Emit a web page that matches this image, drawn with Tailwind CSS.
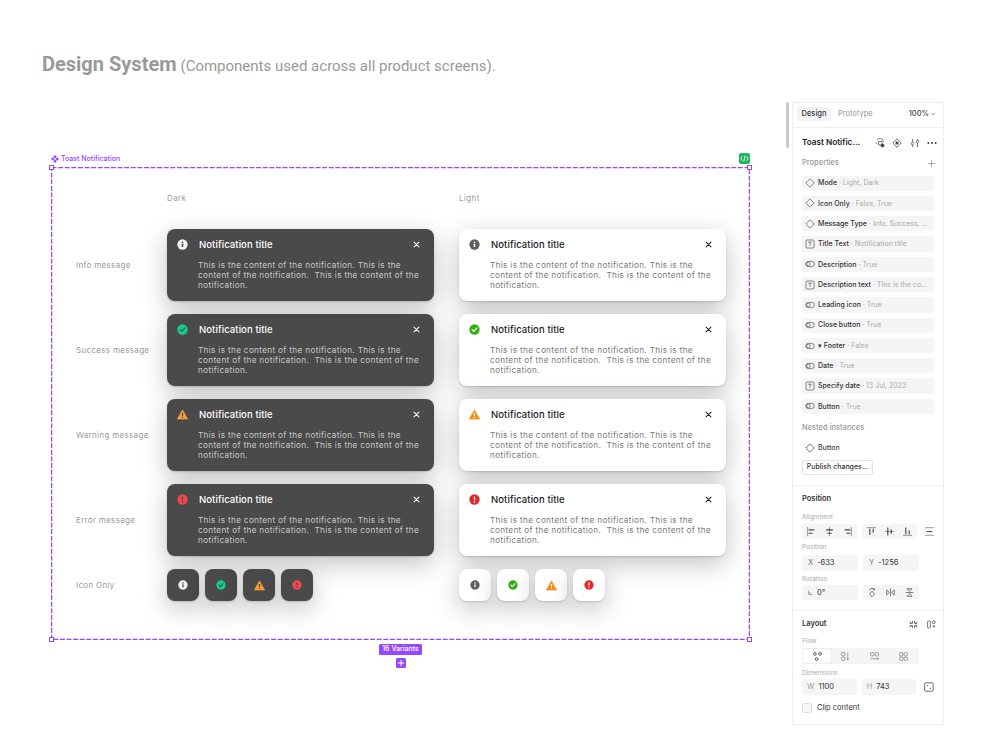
<!DOCTYPE html>
<html>
<head>
<meta charset="utf-8">
<script src="https://cdn.jsdelivr.net/npm/@tailwindcss/browser@4"></script>
</head>
<body class="bg-white">
<svg width="0" height="0" class="absolute">
  <symbol id="info" viewBox="0 0 12 12"><circle cx="6" cy="6" r="5.6" fill="currentColor"/><rect x="5.2" y="5.2" width="1.6" height="3.6" rx=".4" fill="var(--m)"/><circle cx="6" cy="3.6" r=".95" fill="var(--m)"/></symbol>
  <symbol id="ok" viewBox="0 0 12 12"><circle cx="6" cy="6" r="5.6" fill="currentColor"/><path d="M3.4 6.2 5.2 8l3.4-3.6" fill="none" stroke="var(--m)" stroke-width="1.3" stroke-linecap="round" stroke-linejoin="round"/></symbol>
  <symbol id="warn" viewBox="0 0 12 12"><path d="M6 .8 11.7 11H.3Z" fill="currentColor" stroke="currentColor" stroke-width=".6" stroke-linejoin="round"/><rect x="5.4" y="4.2" width="1.2" height="3.6" rx=".4" fill="var(--m)"/><circle cx="6" cy="9.2" r=".75" fill="var(--m)"/></symbol>
  <symbol id="err" viewBox="0 0 12 12"><circle cx="6" cy="6" r="5.6" fill="currentColor"/><rect x="5.3" y="2.8" width="1.4" height="4" rx=".5" fill="var(--m)"/><circle cx="6" cy="8.6" r=".85" fill="var(--m)"/></symbol>
  <symbol id="x" viewBox="0 0 8 8"><path d="M1.2 1.2 6.8 6.8M6.8 1.2 1.2 6.8" stroke="currentColor" stroke-width="1.15" stroke-linecap="round"/></symbol>
  <symbol id="dia" viewBox="0 0 10 10"><path d="M5 .8 9.2 5 5 9.2.8 5Z" fill="none" stroke="currentColor" stroke-width=".7" stroke-linejoin="round"/></symbol>
  <symbol id="txt" viewBox="0 0 10 10"><rect x="1" y="1" width="8" height="8" rx="1" fill="none" stroke="currentColor" stroke-width=".7"/><path d="M3.2 3.2h3.6M5 3.2v3.8" fill="none" stroke="currentColor" stroke-width=".7"/></symbol>
  <symbol id="tog" viewBox="0 0 10 10"><rect x=".7" y="2.4" width="8.6" height="5.2" rx="2.6" fill="none" stroke="currentColor" stroke-width=".7"/><circle cx="3.4" cy="5" r="1.8" fill="none" stroke="currentColor" stroke-width=".7"/></symbol>
</svg>

<div class="relative w-[1000px] h-[750px] overflow-hidden bg-white font-['Roboto',sans-serif]">

  <h1 class="absolute left-[42px] top-[51px] text-[#999999] leading-[26px] whitespace-nowrap">
    <span class="text-[20px] font-bold">Design System</span>
    <span class="text-[15px]">(Components used across all product screens).</span>
  </h1>

  <!-- Component set on the canvas -->
  <div class="absolute left-[51px] top-[153px] w-[699px] flex justify-between items-center h-[11px] text-[#9747ff]">
    <div class="flex items-center gap-[2px] text-[7px] font-['Inter',sans-serif] font-medium">
      <svg class="w-[8px] h-[8px]" viewBox="0 0 8 8"><path d="M4 0 5.8 1.8 4 3.6 2.2 1.8ZM1.8 2.2 3.6 4 1.8 5.8 0 4ZM6.2 2.2 8 4 6.2 5.8 4.4 4ZM4 4.4 5.8 6.2 4 8 2.2 6.2Z" fill="currentColor"/></svg>
      <span class="pt-[2px]">Toast Notification</span>
    </div>
    <div class="w-[11px] h-[11px] rounded-[2px] bg-[#1fb85f] flex items-center justify-center">
      <svg class="w-[9px] h-[7px]" viewBox="0 0 9 7" fill="none" stroke="#fff" stroke-width=".9"><path d="M2.4 1.4.8 3.5l1.6 2.1M6.6 1.4l1.6 2.1-1.6 2.1M5.2.8 3.8 6.2"/></svg>
    </div>
  </div>

  <div class="absolute left-[51px] top-[167px] w-[699px] h-[473px] pl-[25px] pt-[26px] font-['Inter',sans-serif]">
    <svg class="absolute left-0 top-0 w-[699px] h-[473px]" viewBox="0 0 699 473" fill="none"><rect x=".5" y=".5" width="698" height="472" stroke="#9747ff" stroke-width="1.5" stroke-dasharray="5 1.6"/></svg>
    <span class="absolute -left-[2px] -top-[2px] w-[5px] h-[5px] bg-white border border-[#9747ff]"></span>
    <span class="absolute -right-[2px] -top-[2px] w-[5px] h-[5px] bg-white border border-[#9747ff]"></span>
    <span class="absolute -left-[2px] -bottom-[2px] w-[5px] h-[5px] bg-white border border-[#9747ff]"></span>
    <span class="absolute -right-[2px] -bottom-[2px] w-[5px] h-[5px] bg-white border border-[#9747ff]"></span>

    <div class="relative flex h-[10px] items-center text-[8px] tracking-[0.05em] text-[#9a9a9a]">
      <div class="w-[91px]"></div>
      <div class="w-[292px]">Dark</div>
      <div>Light</div>
    </div>

    <div class="relative mt-[26px] flex flex-col gap-[13px]">
      <!-- Info -->
      <div class="flex items-center">
        <div class="w-[91px] text-[8px] tracking-[0.04em] text-[#9a9a9a]">Info message</div>
        <div class="w-[267px] h-[72px] rounded-lg bg-[#4a4a4a] shadow-[0_1px_2px_rgba(0,0,0,0.15),0_8px_26px_rgba(0,0,0,0.24)] pl-[10px] pr-[14px] pt-[10px] [--m:#4a4a4a]">
          <div class="flex items-center h-[11px]">
            <svg class="w-[11px] h-[11px] text-[#f2f2f2]"><use href="#info"/></svg>
            <span class="ml-[11px] pt-[2px] text-[9.5px] font-medium tracking-[0.01em] text-white">Notification title</span>
            <svg class="ml-auto w-[7px] h-[7px] text-white"><use href="#x"/></svg>
          </div>
          <p class="mt-[10px] ml-[21px] text-[8.2px] leading-[10.2px] tracking-[0.04em] whitespace-pre text-[#c8c8c8]">This is the content of the notification. This is the
content of the notification.  This is the content of the
notification.</p>
        </div>
        <div class="ml-[25px] w-[267px] h-[72px] rounded-lg bg-white shadow-[0_1px_2px_rgba(0,0,0,0.15),0_8px_26px_rgba(0,0,0,0.24)] pl-[10px] pr-[14px] pt-[10px] [--m:#ffffff]">
          <div class="flex items-center h-[11px]">
            <svg class="w-[11px] h-[11px] text-[#5f5f5f]"><use href="#info"/></svg>
            <span class="ml-[11px] pt-[2px] text-[9.5px] font-medium tracking-[0.01em] text-[#222222]">Notification title</span>
            <svg class="ml-auto w-[7px] h-[7px] text-[#222222]"><use href="#x"/></svg>
          </div>
          <p class="mt-[10px] ml-[21px] text-[8.2px] leading-[10.2px] tracking-[0.04em] whitespace-pre text-[#7a7a7a]">This is the content of the notification. This is the
content of the notification.  This is the content of the
notification.</p>
        </div>
      </div>
      <!-- Success -->
      <div class="flex items-center">
        <div class="w-[91px] text-[8px] tracking-[0.04em] text-[#9a9a9a]">Success message</div>
        <div class="w-[267px] h-[72px] rounded-lg bg-[#4a4a4a] shadow-[0_1px_2px_rgba(0,0,0,0.15),0_8px_26px_rgba(0,0,0,0.24)] pl-[10px] pr-[14px] pt-[10px] [--m:#4a4a4a]">
          <div class="flex items-center h-[11px]">
            <svg class="w-[11px] h-[11px] text-[#0fd08f]"><use href="#ok"/></svg>
            <span class="ml-[11px] pt-[2px] text-[9.5px] font-medium tracking-[0.01em] text-white">Notification title</span>
            <svg class="ml-auto w-[7px] h-[7px] text-white"><use href="#x"/></svg>
          </div>
          <p class="mt-[10px] ml-[21px] text-[8.2px] leading-[10.2px] tracking-[0.04em] whitespace-pre text-[#c8c8c8]">This is the content of the notification. This is the
content of the notification.  This is the content of the
notification.</p>
        </div>
        <div class="ml-[25px] w-[267px] h-[72px] rounded-lg bg-white shadow-[0_1px_2px_rgba(0,0,0,0.15),0_8px_26px_rgba(0,0,0,0.24)] pl-[10px] pr-[14px] pt-[10px] [--m:#ffffff]">
          <div class="flex items-center h-[11px]">
            <svg class="w-[11px] h-[11px] text-[#2fb010]"><use href="#ok"/></svg>
            <span class="ml-[11px] pt-[2px] text-[9.5px] font-medium tracking-[0.01em] text-[#222222]">Notification title</span>
            <svg class="ml-auto w-[7px] h-[7px] text-[#222222]"><use href="#x"/></svg>
          </div>
          <p class="mt-[10px] ml-[21px] text-[8.2px] leading-[10.2px] tracking-[0.04em] whitespace-pre text-[#7a7a7a]">This is the content of the notification. This is the
content of the notification.  This is the content of the
notification.</p>
        </div>
      </div>
      <!-- Warning -->
      <div class="flex items-center">
        <div class="w-[91px] text-[8px] tracking-[0.04em] text-[#9a9a9a]">Warning message</div>
        <div class="w-[267px] h-[72px] rounded-lg bg-[#4a4a4a] shadow-[0_1px_2px_rgba(0,0,0,0.15),0_8px_26px_rgba(0,0,0,0.24)] pl-[10px] pr-[14px] pt-[10px] [--m:#4a4a4a]">
          <div class="flex items-center h-[11px]">
            <svg class="w-[11px] h-[11px] text-[#f7a035]"><use href="#warn"/></svg>
            <span class="ml-[11px] pt-[2px] text-[9.5px] font-medium tracking-[0.01em] text-white">Notification title</span>
            <svg class="ml-auto w-[7px] h-[7px] text-white"><use href="#x"/></svg>
          </div>
          <p class="mt-[10px] ml-[21px] text-[8.2px] leading-[10.2px] tracking-[0.04em] whitespace-pre text-[#c8c8c8]">This is the content of the notification. This is the
content of the notification.  This is the content of the
notification.</p>
        </div>
        <div class="ml-[25px] w-[267px] h-[72px] rounded-lg bg-white shadow-[0_1px_2px_rgba(0,0,0,0.15),0_8px_26px_rgba(0,0,0,0.24)] pl-[10px] pr-[14px] pt-[10px] [--m:#ffffff]">
          <div class="flex items-center h-[11px]">
            <svg class="w-[11px] h-[11px] text-[#fa8c16]"><use href="#warn"/></svg>
            <span class="ml-[11px] pt-[2px] text-[9.5px] font-medium tracking-[0.01em] text-[#222222]">Notification title</span>
            <svg class="ml-auto w-[7px] h-[7px] text-[#222222]"><use href="#x"/></svg>
          </div>
          <p class="mt-[10px] ml-[21px] text-[8.2px] leading-[10.2px] tracking-[0.04em] whitespace-pre text-[#7a7a7a]">This is the content of the notification. This is the
content of the notification.  This is the content of the
notification.</p>
        </div>
      </div>
      <!-- Error -->
      <div class="flex items-center">
        <div class="w-[91px] text-[8px] tracking-[0.04em] text-[#9a9a9a]">Error message</div>
        <div class="w-[267px] h-[72px] rounded-lg bg-[#4a4a4a] shadow-[0_1px_2px_rgba(0,0,0,0.15),0_8px_26px_rgba(0,0,0,0.24)] pl-[10px] pr-[14px] pt-[10px] [--m:#4a4a4a]">
          <div class="flex items-center h-[11px]">
            <svg class="w-[11px] h-[11px] text-[#f04848]"><use href="#err"/></svg>
            <span class="ml-[11px] pt-[2px] text-[9.5px] font-medium tracking-[0.01em] text-white">Notification title</span>
            <svg class="ml-auto w-[7px] h-[7px] text-white"><use href="#x"/></svg>
          </div>
          <p class="mt-[10px] ml-[21px] text-[8.2px] leading-[10.2px] tracking-[0.04em] whitespace-pre text-[#c8c8c8]">This is the content of the notification. This is the
content of the notification.  This is the content of the
notification.</p>
        </div>
        <div class="ml-[25px] w-[267px] h-[72px] rounded-lg bg-white shadow-[0_1px_2px_rgba(0,0,0,0.15),0_8px_26px_rgba(0,0,0,0.24)] pl-[10px] pr-[14px] pt-[10px] [--m:#ffffff]">
          <div class="flex items-center h-[11px]">
            <svg class="w-[11px] h-[11px] text-[#e62626]"><use href="#err"/></svg>
            <span class="ml-[11px] pt-[2px] text-[9.5px] font-medium tracking-[0.01em] text-[#222222]">Notification title</span>
            <svg class="ml-auto w-[7px] h-[7px] text-[#222222]"><use href="#x"/></svg>
          </div>
          <p class="mt-[10px] ml-[21px] text-[8.2px] leading-[10.2px] tracking-[0.04em] whitespace-pre text-[#7a7a7a]">This is the content of the notification. This is the
content of the notification.  This is the content of the
notification.</p>
        </div>
      </div>
      <!-- Icon only -->
      <div class="flex items-center">
        <div class="w-[91px] text-[8px] tracking-[0.04em] text-[#9a9a9a]">Icon Only</div>
        <div class="w-[267px] flex gap-[6px] [--m:#4a4a4a]">
          <div class="w-[32px] h-[32px] rounded-lg bg-[#4a4a4a] shadow-[0_1px_2px_rgba(0,0,0,0.15),0_8px_26px_rgba(0,0,0,0.24)] flex items-center justify-center"><svg class="w-[10px] h-[10px] text-[#f2f2f2]"><use href="#info"/></svg></div>
          <div class="w-[32px] h-[32px] rounded-lg bg-[#4a4a4a] shadow-[0_1px_2px_rgba(0,0,0,0.15),0_8px_26px_rgba(0,0,0,0.24)] flex items-center justify-center"><svg class="w-[10px] h-[10px] text-[#0fd08f]"><use href="#ok"/></svg></div>
          <div class="w-[32px] h-[32px] rounded-lg bg-[#4a4a4a] shadow-[0_1px_2px_rgba(0,0,0,0.15),0_8px_26px_rgba(0,0,0,0.24)] flex items-center justify-center"><svg class="w-[11px] h-[11px] text-[#f7a035]"><use href="#warn"/></svg></div>
          <div class="w-[32px] h-[32px] rounded-lg bg-[#4a4a4a] shadow-[0_1px_2px_rgba(0,0,0,0.15),0_8px_26px_rgba(0,0,0,0.24)] flex items-center justify-center"><svg class="w-[10px] h-[10px] text-[#f04848]"><use href="#err"/></svg></div>
        </div>
        <div class="ml-[25px] flex gap-[6px] [--m:#ffffff]">
          <div class="w-[32px] h-[32px] rounded-lg bg-white shadow-[0_1px_2px_rgba(0,0,0,0.15),0_8px_26px_rgba(0,0,0,0.24)] flex items-center justify-center"><svg class="w-[10px] h-[10px] text-[#5f5f5f]"><use href="#info"/></svg></div>
          <div class="w-[32px] h-[32px] rounded-lg bg-white shadow-[0_1px_2px_rgba(0,0,0,0.15),0_8px_26px_rgba(0,0,0,0.24)] flex items-center justify-center"><svg class="w-[10px] h-[10px] text-[#2fb010]"><use href="#ok"/></svg></div>
          <div class="w-[32px] h-[32px] rounded-lg bg-white shadow-[0_1px_2px_rgba(0,0,0,0.15),0_8px_26px_rgba(0,0,0,0.24)] flex items-center justify-center"><svg class="w-[11px] h-[11px] text-[#fa8c16]"><use href="#warn"/></svg></div>
          <div class="w-[32px] h-[32px] rounded-lg bg-white shadow-[0_1px_2px_rgba(0,0,0,0.15),0_8px_26px_rgba(0,0,0,0.24)] flex items-center justify-center"><svg class="w-[10px] h-[10px] text-[#e62626]"><use href="#err"/></svg></div>
        </div>
      </div>
    </div>
  </div>

  <div class="absolute left-[379px] top-[644px] w-[43px] flex flex-col items-center gap-[3px] font-['Inter',sans-serif]">
    <div class="w-[43px] h-[11px] rounded-[1.5px] bg-[#9747ff] text-white text-[7px] font-medium flex items-center justify-center">16 Variants</div>
    <div class="w-[10px] h-[10px] rounded-[1.5px] bg-[#9747ff] flex items-center justify-center">
      <svg class="w-[8px] h-[8px]" viewBox="0 0 8 8"><path d="M4 .8v6.4M.8 4h6.4" stroke="#fff" stroke-width="1"/></svg>
    </div>
  </div>

  <!-- Scrollbar -->
  <div class="absolute left-[786px] top-[102px] w-[3px] h-[46px] rounded-full bg-[#c9c9c9]"></div>

  <!-- Properties panel -->
  <aside class="absolute left-[792px] top-[102px] w-[152px] h-[623px] border border-[#eeeeee] bg-white font-['Inter',sans-serif] text-[7.5px] text-[#333333]">
    <div class="h-[25px] border-b border-[#eeeeee] pl-[4px] pr-[8px] pt-[4px] flex items-start">
      <div class="h-[14px] w-[34px] rounded-[2px] bg-[#f3f3f3] flex items-center justify-center font-medium">Design</div>
      <div class="ml-[7px] h-[14px] flex items-center text-[#999999]">Prototype</div>
      <div class="ml-auto h-[14px] flex items-center gap-[2px] font-medium text-[#444444]">100%
        <svg class="w-[4px] h-[4px]" viewBox="0 0 4 4" fill="none" stroke="#444" stroke-width=".6"><path d="M.5 1.2 2 2.8l1.5-1.6"/></svg>
      </div>
    </div>

    <section class="px-[9px] pb-[10px] border-b border-[#eeeeee]">
      <div class="h-[29px] flex items-center">
        <span class="text-[8.2px] font-semibold text-[#222222]">Toast Notific...</span>
        <div class="ml-auto -mr-[3px] flex items-center gap-[7.5px] text-[#444444]">
          <svg class="w-[10px] h-[10px]" viewBox="0 0 10 10" fill="none" stroke="currentColor" stroke-width=".7"><path d="M8.5 4A3.5 3.5 0 0 0 2 2.2M1.5 6A3.5 3.5 0 0 1 1 4.5M3.5 3.5H7v3.5H3.5Z"/><circle cx="7.5" cy="7.5" r="1.6" fill="currentColor"/></svg>
          <svg class="w-[10px] h-[10px]" viewBox="0 0 10 10" fill="none" stroke="currentColor" stroke-width=".8"><path d="M5 .8 9.2 5 5 9.2.8 5Z"/><circle cx="5" cy="5" r="1.2" fill="currentColor"/></svg>
          <svg class="w-[10px] h-[10px]" viewBox="0 0 10 10" fill="none" stroke="currentColor" stroke-width=".7"><path d="M2.5 1v3M2.5 7v2M7.5 1v1M7.5 5v4"/><circle cx="2.5" cy="5.5" r="1.3"/><circle cx="7.5" cy="3.5" r="1.3"/></svg>
          <svg class="w-[10px] h-[4px]" viewBox="0 0 10 4" fill="currentColor"><circle cx="1.4" cy="2" r="1"/><circle cx="5" cy="2" r="1"/><circle cx="8.6" cy="2" r="1"/></svg>
        </div>
      </div>
      <div class="h-[12px] flex items-center justify-between text-[#999999] font-medium">
        <span>Properties</span>
        <svg class="-mr-[2px] w-[9px] h-[9px]" viewBox="0 0 9 9" stroke="#777" stroke-width=".6"><path d="M4.5 1v7M1 4.5h7"/></svg>
      </div>
      <div class="mt-[6.5px] flex flex-col gap-[5px] text-[7px] [&>div>span]:pt-[1px]">
        <div class="h-[15.3px] rounded-[2px] bg-[#f5f5f5] flex items-center pl-[3px] whitespace-nowrap"><svg class="w-[10px] h-[10px] text-[#555555]"><use href="#dia"/></svg><span class="ml-[3px] font-medium">Mode</span><span class="text-[#aaaaaa]">&nbsp;· Light, Dark</span></div>
        <div class="h-[15.3px] rounded-[2px] bg-[#f5f5f5] flex items-center pl-[3px] whitespace-nowrap"><svg class="w-[10px] h-[10px] text-[#555555]"><use href="#dia"/></svg><span class="ml-[3px] font-medium">Icon Only</span><span class="text-[#aaaaaa]">&nbsp;· False, True</span></div>
        <div class="h-[15.3px] rounded-[2px] bg-[#f5f5f5] flex items-center pl-[3px] whitespace-nowrap"><svg class="w-[10px] h-[10px] text-[#555555]"><use href="#dia"/></svg><span class="ml-[3px] font-medium">Message Type</span><span class="text-[#aaaaaa]">&nbsp;· Info, Success, ...</span></div>
        <div class="h-[15.3px] rounded-[2px] bg-[#f5f5f5] flex items-center pl-[3px] whitespace-nowrap"><svg class="w-[10px] h-[10px] text-[#555555]"><use href="#txt"/></svg><span class="ml-[3px] font-medium">Title Text</span><span class="text-[#aaaaaa]">&nbsp;· Notification title</span></div>
        <div class="h-[15.3px] rounded-[2px] bg-[#f5f5f5] flex items-center pl-[3px] whitespace-nowrap"><svg class="w-[10px] h-[10px] text-[#555555]"><use href="#tog"/></svg><span class="ml-[3px] font-medium">Description</span><span class="text-[#aaaaaa]">&nbsp;· True</span></div>
        <div class="h-[15.3px] rounded-[2px] bg-[#f5f5f5] flex items-center pl-[3px] whitespace-nowrap"><svg class="w-[10px] h-[10px] text-[#555555]"><use href="#txt"/></svg><span class="ml-[3px] font-medium">Description text</span><span class="text-[#aaaaaa]">&nbsp;· This is the co...</span></div>
        <div class="h-[15.3px] rounded-[2px] bg-[#f5f5f5] flex items-center pl-[3px] whitespace-nowrap"><svg class="w-[10px] h-[10px] text-[#555555]"><use href="#tog"/></svg><span class="ml-[3px] font-medium">Leading icon</span><span class="text-[#aaaaaa]">&nbsp;· True</span></div>
        <div class="h-[15.3px] rounded-[2px] bg-[#f5f5f5] flex items-center pl-[3px] whitespace-nowrap"><svg class="w-[10px] h-[10px] text-[#555555]"><use href="#tog"/></svg><span class="ml-[3px] font-medium">Close button</span><span class="text-[#aaaaaa]">&nbsp;· True</span></div>
        <div class="h-[15.3px] rounded-[2px] bg-[#f5f5f5] flex items-center pl-[3px] whitespace-nowrap"><svg class="w-[10px] h-[10px] text-[#555555]"><use href="#tog"/></svg><span class="ml-[3px] font-medium">▾ Footer</span><span class="text-[#aaaaaa]">&nbsp;· False</span></div>
        <div class="h-[15.3px] rounded-[2px] bg-[#f5f5f5] flex items-center pl-[3px] whitespace-nowrap"><svg class="w-[10px] h-[10px] text-[#555555]"><use href="#tog"/></svg><span class="ml-[3px] font-medium">Date</span><span class="text-[#aaaaaa]">&nbsp;· True</span></div>
        <div class="h-[15.3px] rounded-[2px] bg-[#f5f5f5] flex items-center pl-[3px] whitespace-nowrap"><svg class="w-[10px] h-[10px] text-[#555555]"><use href="#txt"/></svg><span class="ml-[3px] font-medium">Specify date</span><span class="text-[#aaaaaa]">&nbsp;· 13 Jul, 2023</span></div>
        <div class="h-[15.3px] rounded-[2px] bg-[#f5f5f5] flex items-center pl-[3px] whitespace-nowrap"><svg class="w-[10px] h-[10px] text-[#555555]"><use href="#tog"/></svg><span class="ml-[3px] font-medium">Button</span><span class="text-[#aaaaaa]">&nbsp;· True</span></div>
      </div>
      <div class="mt-[8px] h-[12px] flex items-center text-[#999999] font-medium">Nested instances</div>
      <div class="mt-[6.5px] h-[15px] flex items-center pl-[3px] text-[7px]"><svg class="w-[10px] h-[10px] text-[#333333]"><use href="#dia"/></svg><span class="ml-[3px] font-medium text-[#444444]">Button</span></div>
      <div class="mt-[4.5px] h-[15px] w-[71px] rounded-[2px] border border-[#e3e3e3] flex items-center justify-center text-[7px] font-medium">Publish changes...</div>
    </section>

    <section class="px-[9px] pt-[7px] pb-[10px] border-b border-[#eeeeee]">
      <div class="h-[12px] flex items-center font-semibold text-[#333333]">Position</div>
      <div class="mt-[8px] h-[10px] flex items-center text-[6.5px] text-[#aaaaaa]">Alignment</div>
      <div class="mt-[1px] flex items-center gap-[5px] text-[#444444]">
        <div class="w-[56px] h-[15px] rounded-[2px] bg-[#f5f5f5] grid grid-cols-3 place-items-center">
          <svg class="w-[9px] h-[9px]" viewBox="0 0 8 8" stroke="currentColor" fill="none"><path stroke-width=".5" d="M.6 0v8"/><path stroke-width="1" d="M1.5 2.5h5M1.5 5.5h3.5"/></svg>
          <svg class="w-[9px] h-[9px]" viewBox="0 0 8 8" stroke="currentColor" fill="none"><path stroke-width=".5" d="M4 0v8"/><path stroke-width="1" d="M1 2.5h6M2 5.5h4"/></svg>
          <svg class="w-[9px] h-[9px]" viewBox="0 0 8 8" stroke="currentColor" fill="none"><path stroke-width=".5" d="M7.4 0v8"/><path stroke-width="1" d="M1.5 2.5h5M3 5.5h3.5"/></svg>
        </div>
        <div class="w-[56px] h-[15px] rounded-[2px] bg-[#f5f5f5] grid grid-cols-3 place-items-center">
          <svg class="w-[9px] h-[9px]" viewBox="0 0 8 8" stroke="currentColor" fill="none"><path stroke-width=".5" d="M0 .6h8"/><path stroke-width="1" d="M2.5 1.5v5.5M5.5 1.5v3.5"/></svg>
          <svg class="w-[9px] h-[9px]" viewBox="0 0 8 8" stroke="currentColor" fill="none"><path stroke-width=".5" d="M0 4h8"/><path stroke-width="1" d="M2.5 .5v7M5.5 2v4"/></svg>
          <svg class="w-[9px] h-[9px]" viewBox="0 0 8 8" stroke="currentColor" fill="none"><path stroke-width=".5" d="M0 7.4h8"/><path stroke-width="1" d="M2.5 .5v6M5.5 3v3.5"/></svg>
        </div>
        <svg class="ml-[3px] w-[9px] h-[9px]" viewBox="0 0 8 8" stroke="currentColor" fill="none"><path stroke-width=".5" d="M0 .6h8M0 7.4h8"/><path stroke-width="1" d="M1.5 4h5"/></svg>
      </div>
      <div class="mt-[4px] h-[10px] flex items-center text-[6.5px] text-[#aaaaaa]">Position</div>
      <div class="mt-[2px] flex gap-[5px]">
        <div class="w-[56px] h-[16px] rounded-[2px] bg-[#f5f5f5] flex items-center pl-[6px] gap-[4px]"><span class="text-[#777777]">X</span><span>-633</span></div>
        <div class="w-[56px] h-[16px] rounded-[2px] bg-[#f5f5f5] flex items-center pl-[6px] gap-[4px]"><span class="text-[#777777]">Y</span><span>-1256</span></div>
      </div>
      <div class="mt-[4px] h-[10px] flex items-center text-[6.5px] text-[#aaaaaa]">Rotation</div>
      <div class="flex gap-[5px]">
        <div class="w-[56px] h-[15px] rounded-[2px] bg-[#f5f5f5] flex items-center pl-[6px] gap-[4px]">
          <svg class="w-[5px] h-[5px]" viewBox="0 0 6 6" fill="none" stroke="#777" stroke-width=".7"><path d="M.8.5v5h4.7M.8 3a2.5 2.5 0 0 1 2.4 2.5"/></svg><span>0°</span>
        </div>
        <div class="w-[56px] h-[15px] rounded-[2px] bg-[#f5f5f5] grid grid-cols-3 place-items-center text-[#444444]">
          <svg class="w-[8px] h-[9px]" viewBox="0 0 8 9" fill="none" stroke="currentColor" stroke-width=".7"><path d="M1.5 2A3 3 0 0 1 6.5 1.5M6.5.3v1.4H5M4 3.3 6.6 6 4 8.6 1.4 6Z"/></svg>
          <svg class="w-[9px] h-[9px]" viewBox="0 0 8 8" fill="none" stroke="currentColor" stroke-width=".6"><path d="M4 .5v7M.6 1.8 3 4 .6 6.2ZM7.4 1.8 5 4 7.4 6.2Z"/></svg>
          <svg class="w-[9px] h-[9px]" viewBox="0 0 8 8" fill="none" stroke="currentColor" stroke-width=".6"><path d="M.5 4h7M1.8.6 4 3 6.2.6ZM1.8 7.4 4 5 6.2 7.4Z"/></svg>
        </div>
      </div>
    </section>

    <section class="px-[9px] pt-[7px]">
      <div class="h-[12px] flex items-center font-semibold">
        <span>Layout</span>
        <div class="ml-auto -mr-[2px] flex items-center gap-[9px] text-[#444444]">
          <svg class="w-[9px] h-[9px]" viewBox="0 0 8 8" fill="none" stroke="currentColor" stroke-width=".7"><path d="M.5 1.5 2 3M3 .8V3H.8M7.5 1.5 6 3M5 .8V3h2.2M.5 6.5 2 5M3 7.2V5H.8M7.5 6.5 6 5M5 7.2V5h2.2"/></svg>
          <svg class="w-[9px] h-[9px]" viewBox="0 0 9 9" fill="none" stroke="currentColor" stroke-width=".7"><rect x=".6" y="1" width="2.8" height="7" rx=".7"/><rect x="5.4" y="1" width="2.8" height="2.4" rx=".7"/><path d="M5.6 6.2h2.6M6.9 4.9v2.6"/></svg>
        </div>
      </div>
      <div class="mt-[7px] h-[10px] flex items-center text-[6.5px] text-[#aaaaaa]">Flow</div>
      <div class="mt-[1px] w-[117px] h-[16px] rounded-[2px] bg-[#f5f5f5] flex items-center p-[1px] text-[#777777]">
        <div class="w-[28px] h-[14px] rounded-[2px] bg-white shadow-[0_0_1px_rgba(0,0,0,0.3)] flex items-center justify-center text-[#333333]">
          <svg class="w-[9px] h-[9px]" viewBox="0 0 8 8" fill="none" stroke="currentColor" stroke-width=".7"><circle cx="1.7" cy="1.7" r="1.2"/><circle cx="6.3" cy="1.7" r="1.2"/><circle cx="3.3" cy="6.3" r="1.2"/></svg>
        </div>
        <div class="flex-1 flex justify-center">
          <svg class="w-[9px] h-[9px]" viewBox="0 0 8 8" fill="none" stroke="currentColor" stroke-width=".6"><rect x=".5" y=".5" width="3" height="3" rx=".8"/><rect x=".5" y="4.5" width="3" height="3" rx=".8"/><path d="M6 .5v6.5M4.8 5.8 6 7l1.2-1.2"/></svg>
        </div>
        <div class="flex-1 flex justify-center">
          <svg class="w-[9px] h-[9px]" viewBox="0 0 8 8" fill="none" stroke="currentColor" stroke-width=".6"><rect x=".5" y=".5" width="3" height="3" rx=".8"/><rect x="4.5" y=".5" width="3" height="3" rx=".8"/><path d="M.5 6h7M6.3 4.8 7.5 6 6.3 7.2"/></svg>
        </div>
        <div class="flex-1 flex justify-center">
          <svg class="w-[9px] h-[9px]" viewBox="0 0 8 8" fill="none" stroke="currentColor" stroke-width=".6"><rect x=".5" y=".5" width="3" height="3" rx=".8"/><rect x="4.5" y=".5" width="3" height="3" rx=".8"/><rect x=".5" y="4.5" width="3" height="3" rx=".8"/><rect x="4.5" y="4.5" width="3" height="3" rx=".8"/></svg>
        </div>
      </div>
      <div class="mt-[5px] h-[10px] flex items-center text-[6.5px] text-[#aaaaaa]">Dimensions</div>
      <div class="flex items-center gap-[5px]">
        <div class="w-[56px] h-[16px] rounded-[2px] bg-[#f5f5f5] flex items-center pl-[5px] gap-[4px]"><span class="text-[#999999]">W</span><span>1100</span></div>
        <div class="w-[56px] h-[16px] rounded-[2px] bg-[#f5f5f5] flex items-center pl-[5px] gap-[4px]"><span class="text-[#999999]">H</span><span>743</span></div>
        <svg class="ml-[3px] w-[10px] h-[10px]" viewBox="0 0 9 9" fill="none" stroke="#444" stroke-width=".7"><rect x=".6" y=".6" width="7.8" height="7.8" rx="1"/><path d="M3 3.2h.8M5.4 5.8h.8" stroke-width="1"/></svg>
      </div>
      <div class="mt-[7px] h-[11px] flex items-center">
        <span class="w-[10px] h-[10px] rounded-[2px] border border-[#dddddd] bg-[#f7f7f7]"></span>
        <span class="ml-[5px]">Clip content</span>
      </div>
    </section>
  </aside>
</div>
</body>
</html>
